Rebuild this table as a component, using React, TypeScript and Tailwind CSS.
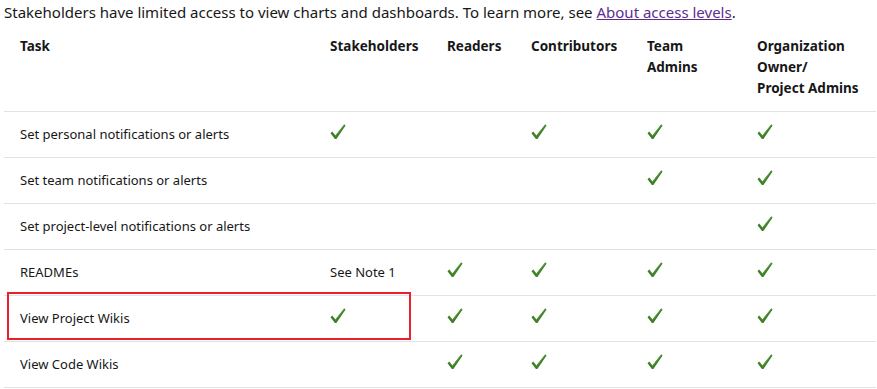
import React from "react";

const Check = () => (
  <svg width="16" height="16" viewBox="0 0 16 16" className="block">
    <path d="M0.5 9.2 L2.2 7.6 L5.4 11.4 L14.2 0.6 L15.6 1.6 L6.4 15 L4.9 15 Z" fill="#3f7f2a" />
    <path d="M2.2 7.6 L5.4 11.4 L14.2 0.6 L14.9 1.1 L5.6 12.6 Z" fill="#5a9e3c" />
  </svg>
);

type Cell = boolean | string;
const rows: { task: string; cells: Cell[] }[] = [
  { task: "Set personal notifications or alerts", cells: [true, false, true, true, true] },
  { task: "Set team notifications or alerts", cells: [false, false, false, true, true] },
  { task: "Set project-level notifications or alerts", cells: [false, false, false, false, true] },
  { task: "READMEs", cells: ["See Note 1", true, true, true, true] },
  { task: "View Project Wikis", cells: [true, true, true, true, true] },
  { task: "View Code Wikis", cells: [false, true, true, true, true] },
];

const cols = "grid grid-cols-[310px_117px_84px_116px_110px_135px]";

export default function App() {
  return (
    <div className="w-[877px] h-[389px] bg-white text-[#171717] overflow-hidden" style={{ fontFamily: '"Segoe UI", "Noto Sans", sans-serif' }}>
      <p className="pl-[4px] text-[15px] leading-[24px]">
        Stakeholders have limited access to view charts and dashboards. To learn more, see{" "}
        <a className="text-[#5c2d91] underline">About access levels</a>.
      </p>
      <div className="relative ml-[4px] w-[872px]">
        <div className={`${cols} border-b border-[#e3e3e3] py-3 text-[13.5px] leading-[21px] font-bold`}>
          <div className="pl-4">Task</div>
          <div className="pl-4">Stakeholders</div>
          <div className="pl-4">Readers</div>
          <div className="pl-4">Contributors</div>
          <div className="pl-4">Team<br />Admins</div>
          <div className="pl-4">Organization<br />Owner/<br />Project Admins</div>
        </div>
        {rows.map((r) => (
          <div key={r.task} className={`${cols} h-[46px] items-center border-b border-[#e3e3e3] text-[13px]`}>
            <div className="pl-4">{r.task}</div>
            {r.cells.map((c, i) => (
              <div key={i} className="pl-4">
                {c === true ? <div className="-mt-[6px]"><Check /></div> : c ? c : null}
              </div>
            ))}
          </div>
        ))}
        <div className="absolute left-[3px] top-[268px] w-[404px] h-[48px] border-2 border-[#e8212d]" />
      </div>
    </div>
  );
}
